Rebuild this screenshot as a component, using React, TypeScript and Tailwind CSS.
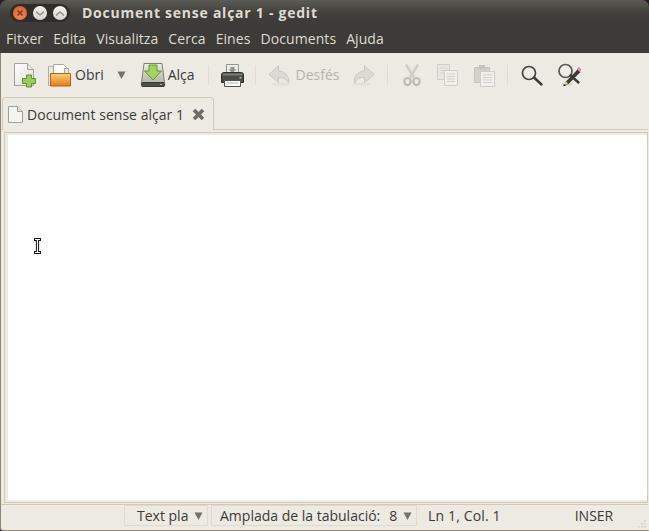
import React from 'react';

const uiFont = 'font-["Open_Sans","Noto_Sans",sans-serif]';

function NewIcon() {
  return (
    <svg width="24" height="26" viewBox="0 0 24 26">
      <defs>
        <linearGradient id="pg" x1="0" y1="0" x2="1" y2="1">
          <stop offset="0" stopColor="#ffffff" />
          <stop offset="1" stopColor="#dcdcd6" />
        </linearGradient>
      </defs>
      <path d="M1.500 1.500h13l6 6v16h-19z" fill="url(#pg)" stroke="#a3a39c" />
      <path d="M14.500 1.500v6h6" fill="#e6e6e0" stroke="#a3a39c" />
      <path d="M14 14h5v3.500h4v5h-4V26h-5v-3.500h-4v-5h4z" transform="translate(-0.500 -1)" fill="#9ccb5c" stroke="#5f8f2c" />
    </svg>
  );
}

function OpenIcon() {
  return (
    <svg width="25" height="24" viewBox="0 0 25 24">
      <defs>
        <linearGradient id="fo" x1="0" y1="0" x2="0" y2="1">
          <stop offset="0" stopColor="#fbcf7a" />
          <stop offset="1" stopColor="#e07f1a" />
        </linearGradient>
      </defs>
      <path d="M1.500 3.500h5v19h-5z" fill="#e8e8e2" stroke="#b0b0a8" />
      <path d="M6.500 1.500h10l3 3v7h-13z" fill="#fff" stroke="#a8a8a0" />
      <path d="M17.500 5.500h4v6h-4z" fill="#e6e6e0" stroke="#a8a8a0" />
      <path d="M3.500 10.500h20v12.500h-20z" fill="url(#fo)" stroke="#b8650f" />
    </svg>
  );
}

function SaveIcon() {
  return (
    <svg width="24" height="24" viewBox="0 0 24 24">
      <defs>
        <linearGradient id="hd" x1="0" y1="0" x2="0" y2="1">
          <stop offset="0" stopColor="#eeeee9" />
          <stop offset="1" stopColor="#b4b4ac" />
        </linearGradient>
      </defs>
      <path d="M3 .5h18l2.500 19h-23z" fill="url(#hd)" stroke="#7f7f77" />
      <rect x=".5" y="19.500" width="23" height="4" rx="1" fill="#4e4e48" stroke="#3a3a36" />
      <rect x="19" y="21" width="2" height="1" fill="#9fd05a" />
      <path d="M8 2h8v6h4.500l-8.500 9-8.500-9H8z" fill="#a4d35e" stroke="#5f9a26" />
    </svg>
  );
}

function PrintIcon() {
  return (
    <svg width="23" height="23" viewBox="0 0 23 23">
      <path d="M5.500 .5h12v9h-12z" fill="#ebebe7" stroke="#96968f" />
      <path d="M9.500 3h4v2.500h2l-4 3.500-4-3.500h2z" fill="#93938c" />
      <path d="M.5 10.500c0-1 1-2 2-2h18c1 0 2 1 2 2v8h-22z" fill="#4a4a46" stroke="#2e2e2b" />
      <rect x="2" y="9.500" width="19" height="2" fill="#7c7c76" />
      <rect x="18.500" y="13" width="2" height="1.500" fill="#a5d65c" />
      <path d="M3.500 16.500h16v6h-16z" fill="#fafaf8" stroke="#55554f" />
      <path d="M6 19h11" stroke="#b5b5ae" />
    </svg>
  );
}

function ArrowIcon({ flip }: { flip?: boolean }) {
  return (
    <svg width="23" height="22" viewBox="0 0 23 22" className={flip ? '-scale-x-100' : ''}>
      <ellipse cx="13" cy="20" rx="9" ry="1.500" fill="#e4e0d9" />
      <path d="M10.500 2L1 10.500l9.500 8v-5c4-.5 7.500 1 10 5.500 1-6-2.500-11.500-10-12z" fill="#dcdad4" stroke="#c8c6c0" />
    </svg>
  );
}

function CutIcon() {
  return (
    <svg width="18" height="22" viewBox="0 0 18 22" fill="none">
      <path d="M3 .5l8 13M15 .5l-8 13" stroke="#cfcdc8" strokeWidth="2.500" />
      <ellipse cx="4.500" cy="17.500" rx="3.200" ry="3.500" stroke="#bdbbb6" strokeWidth="2.200" />
      <ellipse cx="13.500" cy="17.500" rx="3.200" ry="3.500" stroke="#bdbbb6" strokeWidth="2.200" />
    </svg>
  );
}

function CopyIcon() {
  return (
    <svg width="21" height="22" viewBox="0 0 21 22">
      <path d="M.5.5h12v15H.5z" fill="#e8e6e1" stroke="#cfcdc8" />
      <path d="M3 4h8M3 6.500h8M3 9h8" stroke="#d6d4cf" />
      <path d="M7.500 6.500h13v15h-13z" fill="#f1efeb" stroke="#cfcdc8" />
      <path d="M10 10h8M10 12.500h8M10 15h8M10 17.500h8" stroke="#d3d1cc" />
    </svg>
  );
}

function PasteIcon() {
  return (
    <svg width="21" height="23" viewBox="0 0 21 23">
      <path d="M.5 3.500h15v15H.5z" fill="#d4d2cd" stroke="#c6c4bf" />
      <path d="M5 3V1h6v2h2v2.500H3V3z" fill="#c6c4bf" />
      <path d="M6.500 7.500h14v15h-14z" fill="#f1efeb" stroke="#cfcdc8" />
      <path d="M9 11h9M9 13.500h9M9 16h9M9 18.500h9" stroke="#d3d1cc" />
    </svg>
  );
}

function FindIcon() {
  return (
    <svg width="22" height="21" viewBox="0 0 22 21" fill="none">
      <circle cx="8" cy="8" r="6.500" stroke="#454543" strokeWidth="1.700" fill="#f4f2ee" fillOpacity=".5" />
      <path d="M13 12.500l7.500 7" stroke="#3a3a38" strokeWidth="2.400" strokeLinecap="round" />
    </svg>
  );
}

function ReplaceIcon() {
  return (
    <svg width="24" height="24" viewBox="0 0 24 24" fill="none">
      <ellipse cx="9" cy="21" rx="6" ry="1.800" fill="#dcd9d2" />
      <circle cx="7.500" cy="8" r="6.500" stroke="#5a5a58" strokeWidth="1.700" fill="#f4f2ee" fillOpacity=".5" />
      <path d="M12.500 12.500l8 7" stroke="#3a3a38" strokeWidth="2.400" strokeLinecap="round" />
      <path d="M19.500 6.500l3 2.500L10.500 21l-3.500 1 1-3.500z" fill="#3a3a38" />
      <path d="M19 6l1.500-1.500c1 0 2.500 1.500 2.500 2.500L21.500 8.500z" fill="#e48fc0" stroke="#b5669a" strokeWidth=".5" />
      <path d="M8 18.500l-1.500 3.500 3.500-1.500z" fill="#e8dc78" />
      <path d="M5.500 21.500h2v1.500h-2z" fill="#111" />
    </svg>
  );
}

function TabPageIcon() {
  return (
    <svg width="15" height="17" viewBox="0 0 15 17">
      <path d="M.5.5h9l5 5v11H.5z" fill="#f4f4f0" stroke="#a0a09a" />
      <path d="M9.500.5v5h5" fill="#e2e2dc" stroke="#a0a09a" />
    </svg>
  );
}

function WindowButton({ kind }: { kind: 'close' | 'min' | 'max' }) {
  if (kind === 'close') {
    return (
      <div className="flex h-[14px] w-[14px] items-center justify-center rounded-full bg-[radial-gradient(circle_at_50%_70%,#f58a52,#d8562a)]">
        <svg width="8" height="8" viewBox="0 0 8 8">
          <path d="M1.500 1.500l5 5M6.500 1.500l-5 5" stroke="#7a3a22" strokeWidth="1.500" />
        </svg>
      </div>
    );
  }
  return (
    <div className="flex h-[14px] w-[14px] items-center justify-center rounded-full bg-[linear-gradient(#f5f3ef,#d8d5cd)]">
      <svg width="10" height="7" viewBox="0 0 10 7" fill="none">
        <path d={kind === 'min' ? 'M1 1.500l4 3.500 4-3.500' : 'M1 5.500l4-3.500 4 3.500'} stroke="#8f8d86" strokeWidth="1.600" />
      </svg>
    </div>
  );
}

function Separator({ className }: { className: string }) {
  return <div className={`h-[20px] w-px bg-[#e2ddd2] ${className}`} />;
}

function DownArrow({ className }: { className?: string }) {
  return (
    <svg width="9" height="8" viewBox="0 0 9 8" className={className}>
      <path d="M.5 .5h8L4.500 8z" fill="#73716b" />
    </svg>
  );
}

export default function App() {
  const menus = ['Fitxer', 'Edita', 'Visualitza', 'Cerca', 'Eines', 'Documents', 'Ajuda'];

  return (
    <div className={`relative flex h-[531px] w-[649px] flex-col overflow-hidden bg-[#2a1a26] ${uiFont} text-[14px] text-[#3c3b37]`}>
      {/* Title bar */}
      <div className="flex h-[26px] shrink-0 items-center rounded-t-[7px] bg-[linear-gradient(#5c5a54,#403e3a_55%,#3c3b37)] pl-[10px]">
        <div className="flex h-[18px] items-center gap-[6px] rounded-full bg-[#2e2d2a] px-[3px]">
          <WindowButton kind="close" />
          <WindowButton kind="min" />
          <WindowButton kind="max" />
        </div>
        <span className="ml-[12px] pb-[2px] text-[14px] font-bold tracking-[0.75px] text-[#dfdbd2]">Document sense alçar 1 - gedit</span>
      </div>

      {/* Menu bar */}
      <div className="flex h-[27px] shrink-0 items-center gap-[10px] bg-[#3c3b37] pb-[2px] pl-[6px] text-[14px] tracking-[0.08px] text-[#dfdbd2]">
        {menus.map((m) => (
          <span key={m}>{m}</span>
        ))}
      </div>

      {/* Window body */}
      <div className="flex min-h-0 flex-1 flex-col rounded-bl-[3px] border-b border-l border-r border-[#8f8672] border-r-[#ede9e3] bg-[#ede9e3]">
        {/* Toolbar */}
        <div className="flex h-[44px] shrink-0 items-center">
          <div className="ml-[12px]"><NewIcon /></div>
          <div className="ml-[10px]"><OpenIcon /></div>
          <span className="ml-[3px] pb-[2px]">Obri</span>
          <DownArrow className="ml-[13px]" />
          <div className="ml-[15px]"><SaveIcon /></div>
          <span className="ml-[3px] pb-[2px]">Alça</span>
          <Separator className="ml-[13px]" />
          <div className="ml-[12px]"><PrintIcon /></div>
          <Separator className="ml-[11px]" />
          <div className="ml-[12px]"><ArrowIcon /></div>
          <span className="ml-[5px] pb-[2px] text-[#b8b4aa]">Desfés</span>
          <div className="ml-[12px]"><ArrowIcon flip /></div>
          <Separator className="ml-[12px]" />
          <div className="ml-[15px]"><CutIcon /></div>
          <div className="ml-[16px]"><CopyIcon /></div>
          <div className="ml-[16px]"><PasteIcon /></div>
          <Separator className="ml-[12px]" />
          <div className="ml-[13px]"><FindIcon /></div>
          <div className="ml-[15px]"><ReplaceIcon /></div>
        </div>

        {/* Tab strip */}
        <div className="flex h-[33px] shrink-0 items-stretch border-b border-[#d2cab6]">
          <div className="z-10 ml-px -mb-px flex w-[212px] items-center rounded-t-[4px] border-x border-t border-[#d2cab6] bg-[#ede9e3] pl-[5px]">
            <TabPageIcon />
            <span className="ml-[4px] tracking-[0.03px]">Document sense alçar 1</span>
            <svg width="13" height="13" viewBox="0 0 13 13" className="ml-[8px]">
              <path d="M2 2l9 9M11 2l-9 9" stroke="#6c6b66" strokeWidth="3.600" />
            </svg>
          </div>
        </div>

        {/* Editor */}
        <div className="mb-px ml-[3px] mt-[2px] min-h-0 flex-1 border border-[#d2cab6] pb-[2px] pl-[3px] pt-[2px]">
          <div className="h-full bg-white" />
        </div>

        {/* Status bar */}
        <div className="relative flex h-[26px] shrink-0 items-center border-t border-[#d2cab6] pb-[4px]">
          <div className="ml-[123px] flex h-full w-[84px] items-center border border-[#e0dbce] pl-[12px]">
            Text pla
            <DownArrow className="ml-[6px]" />
          </div>
          <div className="ml-[3px] flex h-full w-[206px] items-center border border-[#e0dbce] pl-[8px]">
            Amplada de la tabulació:
            <span className="ml-[9px]">8</span>
            <DownArrow className="ml-[6px]" />
          </div>
          <span className="ml-[11px] tracking-[0.15px]">Ln 1, Col. 1</span>
          <span className="ml-[74px]">INSER</span>
          {/* Resize grip */}
          <svg width="10" height="10" viewBox="0 0 10 10" className="absolute bottom-[1px] right-[1px]">
            <path d="M7 1h1.500v1.500H7zM4 4h1.500v1.500H4zM7 4h1.500v1.500H7zM1 7h1.500v1.500H1zM4 7h1.500v1.500H4zM7 7h1.500v1.500H7z" fill="#d2cab6" />
          </svg>
        </div>
      </div>

      {/* Text cursor over the editor */}
      <svg width="9" height="16" viewBox="0 0 9 16" className="absolute left-[33px] top-[238px]">
        <path d="M1 1.500h7M1 14.500h7M4.500 1.500v13" stroke="#111" strokeWidth="3.200" />
        <path d="M2 1.500h5M2 14.500h5M4.500 1.500v13" stroke="#fff" strokeWidth="1.200" />
      </svg>
    </div>
  );
}
